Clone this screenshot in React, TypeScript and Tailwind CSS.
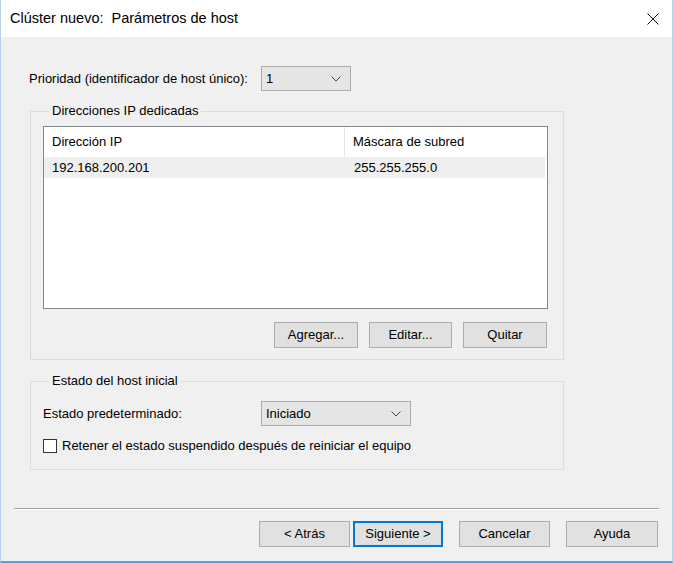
import React from "react";

const font = { fontFamily: '"Liberation Sans", Arial, sans-serif' };

const Chevron = () => (
  <svg width="10" height="6" viewBox="0 0 10 6" className="shrink-0">
    <path d="M0.5 0.5 L5 5 L9.5 0.5" fill="none" stroke="#444" strokeWidth="1" />
  </svg>
);

const Combo = ({ value, width }: { value: string; width: string }) => (
  <div
    className={`${width} h-[25px] flex items-center justify-between pl-[4px] pr-[9px] bg-[#e5e5e5] border border-[#acacac] text-[13px] text-black`}
  >
    <span>{value}</span>
    <Chevron />
  </div>
);

const Button = ({
  label,
  width,
  focused,
}: {
  label: string;
  width: string;
  focused?: boolean;
}) => (
  <button
    className={`${width} h-[26px] flex items-center justify-center bg-[#e1e1e1] text-[13px] text-black ${
      focused ? "border-2 border-[#0078d7]" : "border border-[#adadad]"
    }`}
  >
    {label}
  </button>
);

export default function App() {
  return (
    <div
      style={font}
      className="w-[673px] h-[563px] flex flex-col bg-[#f0f0f0] border-l border-r border-b-2 border-l-[#b4d2ee] border-r-[#b4d2ee] border-b-[#5f9ed8] text-black overflow-hidden"
    >
      {/* title bar */}
      <div className="h-[37px] shrink-0 bg-white flex items-center justify-between pl-[9px] pr-[13px]">
        <span className="text-[14.5px] whitespace-pre">Clúster nuevo:  Parámetros de host</span>
        <svg width="12" height="12" viewBox="0 0 12 12">
          <path d="M0.5 0.5 L11.5 11.5 M11.5 0.5 L0.5 11.5" stroke="#111" strokeWidth="1" />
        </svg>
      </div>

      <div className="flex flex-col pl-[29px]">
        {/* priority */}
        <div className="flex items-center mt-[29px] text-[13px]">
          <span className="w-[232px] -ml-[1px]">Prioridad (identificador de host único):</span>
          <Combo value="1" width="w-[90px]" />
        </div>

        {/* dedicated addresses */}
        <fieldset className="w-[534px] mt-[11px] border border-[#dcdcdc] pl-[12px] pr-[15px] pb-[11px]">
          <legend className="ml-[6px] px-[3px] text-[13px] leading-[18px]">Direcciones IP dedicadas</legend>
          <div className="mt-[6px] w-[505px] h-[183px] border border-[#828790] bg-white">
            <div className="flex h-[30px] items-center text-[13px]">
              <div className="w-[301px] h-full flex items-center pl-[8px] border-r border-[#e5e5e5]">
                Dirección IP
              </div>
              <div className="pl-[8px]">Máscara de subred</div>
            </div>
            <div className="flex h-[21px] w-[501px] items-center bg-[#efefef] text-[13px]">
              <div className="w-[302px] pl-[8px]">192.168.200.201</div>
              <div className="pl-[8px]">255.255.255.0</div>
            </div>
          </div>
          <div className="flex justify-end gap-[11px] mt-[13px] pr-[1px]">
            <Button label="Agregar..." width="w-[84px]" />
            <Button label="Editar..." width="w-[83px]" />
            <Button label="Quitar" width="w-[84px]" />
          </div>
        </fieldset>

        {/* initial host state */}
        <fieldset className="w-[534px] mt-[12px] border border-[#dcdcdc] pl-[12px] pb-[13px]">
          <legend className="ml-[6px] px-[3px] text-[13px] leading-[18px]">Estado del host inicial</legend>
          <div className="flex items-center mt-[11px] text-[13px]">
            <span className="w-[218px]">Estado predeterminado:</span>
            <Combo value="Iniciado" width="w-[150px]" />
          </div>
          <div className="flex items-center mt-[10px] text-[13px]">
            <span className="w-[14px] h-[14px] border border-[#333] bg-white shrink-0" />
            <span className="ml-[5px]">Retener el estado suspendido después de reiniciar el equipo</span>
          </div>
        </fieldset>
      </div>

      {/* separator */}
      <div className="mt-[38px] mx-[13px] h-px bg-[#a0a0a0] border-b border-white box-content" />

      {/* wizard buttons */}
      <div className="flex justify-end items-center mt-[11px] pr-[14px]">
        <Button label="< Atrás" width="w-[91px]" />
        <div className="ml-[3px]">
          <Button label="Siguiente >" width="w-[90px]" focused />
        </div>
        <div className="ml-[16px]">
          <Button label="Cancelar" width="w-[91px]" />
        </div>
        <div className="ml-[16px]">
          <Button label="Ayuda" width="w-[92px]" />
        </div>
      </div>
    </div>
  );
}
